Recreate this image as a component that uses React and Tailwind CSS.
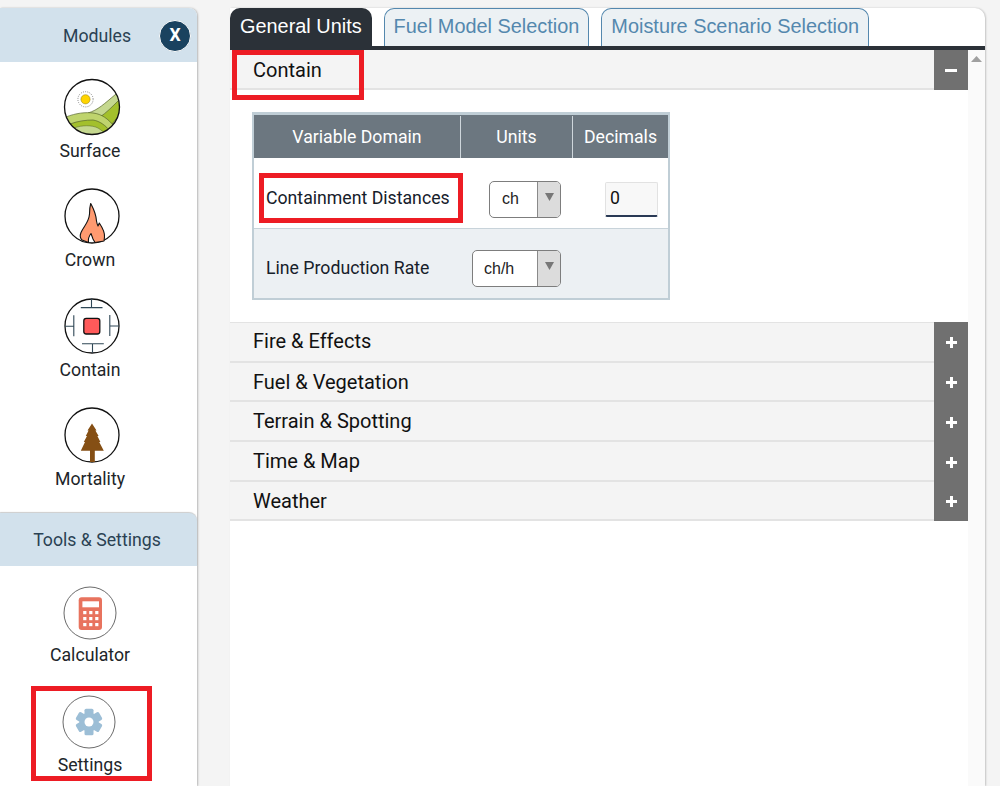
import React from "react";

const Circle = ({ children, thin }) => (
  <svg width="60" height="60" viewBox="0 0 60 60" className="block">
    <circle cx="30" cy="30" r={thin ? 26 : 27} fill="#fff" stroke={thin ? "#444" : "#111"} strokeWidth={thin ? 0.8 : 1.3} />
    {children}
  </svg>
);

const SurfaceIcon = () => (
  <svg width="60" height="60" viewBox="0 0 60 60" className="block">
    <defs>
      <clipPath id="sf"><circle cx="30" cy="30" r="27.4" /></clipPath>
    </defs>
    <circle cx="30" cy="30" r="27.5" fill="#fff" />
    <g clipPath="url(#sf)">
      <path d="M26 36 C36 33 42 27 54 17 L60 20 L60 60 L30 60 Z" fill="#c5d88f" stroke="#56652a" strokeWidth=".7" />
      <path d="M38 40 C44 36 50 30 57 23 L58 37 L50 47 Z" fill="#a3c02c" stroke="#56652a" strokeWidth=".7" />
      <path d="M4 40 C14 36 24 35 31 36 C40 37 46 42 52 49 L40 60 L0 60 Z" fill="#bfd46d" stroke="#56652a" strokeWidth=".7" />
      <path d="M8 47 C16 44 24 43 31 43 C38 44 44 49 48 54 L40 60 L14 60 Z" fill="#a3c02c" stroke="#56652a" strokeWidth=".7" />
      <path d="M12 51 C20 48 30 48 36 51 C39 53 42 55 44 58 L30 62 L14 60 Z" fill="#c5d88f" stroke="#56652a" strokeWidth=".5" />
    </g>
    <circle cx="30" cy="30" r="27.5" fill="none" stroke="#111" strokeWidth="1.3" />
    <circle cx="23.5" cy="22.3" r="7.6" fill="none" stroke="#777" strokeWidth=".9" strokeDasharray="1 1.2" />
    <circle cx="23.5" cy="22.3" r="4.6" fill="#ffd400" stroke="#8a7a10" strokeWidth=".5" />
  </svg>
);

const CrownIcon = () => (
  <Circle>
    <path d="M28.7 17.5 C31 22 34 27 34.5 35 C35 38 35.5 39 36 40 C36.5 39 37 38 37.3 37 C40 41 43 46 42.5 51 L42 55 L33 56.5 L31 53 L29 47.5 C27 50 26 53 26.5 56.5 L20 54 C18 52 18 49 19 46.5 C22 40 27 36 27.5 28 C27.5 24 28 20 28.7 17.5 Z" fill="#ff9a70" stroke="#111" strokeWidth="1.1" strokeLinejoin="round" />
  </Circle>
);

const ContainIcon = () => (
  <Circle>
    <g stroke="#2f4756" strokeWidth="1.1" fill="none">
      <path d="M18.8 11.6 H40.5 M29.5 2.6 V11.6" />
      <path d="M20 47.8 H41.8 M30.5 47.8 V56.8" />
      <path d="M11.8 19.3 V40.3 M3 30.3 H11.8" />
      <path d="M47.8 19 V40 M47.8 30 H57" />
    </g>
    <rect x="21.8" y="22.3" width="16" height="15.7" rx="2.5" fill="#ff5a5a" stroke="#111" strokeWidth="1.3" />
  </Circle>
);

const MortalityIcon = () => (
  <Circle>
    <path d="M30 18.5 L34.5 25.5 L33.4 25.5 L36.6 31 L35.4 31 L38.4 37 L37.2 37 L41.8 45.7 L32.8 45.7 L32.8 57 L28 57 L28 45.7 L18.8 45.7 L23 37 L21.8 37 L25 31 L23.8 31 L26.6 25.5 L25.5 25.5 Z" fill="#854f14" />
  </Circle>
);

const CalcIcon = () => (
  <Circle thin>
    <rect x="18.7" y="14.3" width="23.3" height="32.7" rx="3" fill="#e8735e" />
    <rect x="22.4" y="18.3" width="16.6" height="6" fill="#fff" />
    {[28, 34, 40].map((y) =>
      [23.2, 29.2, 35.2].map((x) => <rect key={`${x}${y}`} x={x} y={y} width="3.2" height="3.2" fill="#fff" />)
    )}
  </Circle>
);

const GearIcon = () => (
  <Circle thin>
    <g transform="translate(30 30)">
      <g fill="#9cbed6">
        {[0, 60, 120, 180, 240, 300].map((a) => (
          <rect key={a} x="-4.5" y="-13.3" width="9" height="8" rx="1.6" transform={`rotate(${a})`} />
        ))}
      </g>
      <circle r="9.6" fill="#9cbed6" />
      <circle r="4.5" fill="#fff" />
    </g>
  </Circle>
);

const NavItem = ({ icon, label, iconClass = "ml-[4px]", labelClass = "mt-[3px]" }) => (
  <div className="flex flex-col items-center">
    <div className={iconClass}>{icon}</div>
    <span className={`text-[17.7px] leading-[22px] text-[#212529] ${labelClass}`}>{label}</span>
  </div>
);

const Arrow = () => (
  <svg width="9" height="8" viewBox="0 0 9 8"><path d="M0 0H9L4.5 8Z" fill="#777" /></svg>
);

const Select = ({ value, className, pad }) => (
  <div className={`flex h-[37px] rounded-[5px] border border-[#7d7d7d] overflow-hidden bg-white ${className}`}>
    <div
      className={`flex-1 flex items-center text-[16px] text-[#222] ${pad}`}
      style={{ fontFamily: '"Liberation Sans", Arial, sans-serif' }}
    >
      {value}
    </div>
    <div className="w-[23px] bg-[#dcdcdc] border-l border-[#8a8a8a] flex items-start justify-center pt-[11px]">
      <Arrow />
    </div>
  </div>
);

const AccRow = ({ label, sign = "+", className = "h-[40px]", textClass = "", btnClass = "" }) => (
  <div className={`flex bg-[#f4f4f4] border-b-2 border-[#e3e3e3] ${className}`}>
    <div className={`flex-1 pl-[23px] flex items-center text-[20px] text-[#111] ${textClass}`}>{label}</div>
    <div className={`w-[34px] -mb-[2px] bg-[#707070] flex items-center justify-center ${btnClass}`}>
      {sign === "+" ? (
        <svg width="11" height="11" viewBox="0 0 11 11"><path d="M4 0H7V4H11V7H7V11H4V7H0V4H4Z" fill="#fff" /></svg>
      ) : (
        <svg width="12" height="3" viewBox="0 0 12 3"><rect width="12" height="3" fill="#fff" /></svg>
      )}
    </div>
  </div>
);

const Tab = ({ label, active, className = "" }) => (
  <div
    className={`h-[38px] rounded-t-[10px] flex items-center text-[19.9px] ${
      active ? "px-[10px] bg-[#2b3138] text-white" : "px-[9px] pb-[2px] bg-[#ecf1f4] text-[#5488ae] border border-b-0 border-[#5488ae]"
    } ${className}`}
    style={{ fontFamily: '"Liberation Sans", Arial, sans-serif' }}
  >
    {label}
  </div>
);

const RedBox = ({ className }) => <div className={`absolute border-[5px] border-[#ed1c24] ${className}`} />;

export default function App() {
  return (
    <div
      className="relative h-[786px] w-[1000px] overflow-hidden bg-[#f4f4f4] flex pt-2"
      style={{ fontFamily: 'Roboto, "Liberation Sans", sans-serif' }}
    >
      {/* Sidebar */}
      <aside className="w-[197px] shrink-0 flex flex-col bg-white shadow-[1px_0_2px_rgba(0,0,0,0.25)] rounded-tr-[8px]">
        <div className="relative h-[54px] shrink-0 bg-[#d2e1ec] rounded-tr-[8px] flex items-center justify-center pr-[3px] pt-[2px]">
          <span className="text-[17.7px] text-[#2a4153]">Modules</span>
          <div className="absolute left-[159px] top-[11.5px] h-[32px] w-[32px] rounded-full bg-[#1a425f] border border-white flex items-center justify-center text-white font-bold text-[17.6px] leading-none">
            X
          </div>
        </div>
        <div className="h-[451px] w-[180px] shrink-0 flex flex-col pt-[15px] gap-[24.3px]">
          <NavItem icon={<SurfaceIcon />} label="Surface" />
          <NavItem icon={<CrownIcon />} label="Crown" />
          <NavItem icon={<ContainIcon />} label="Contain" />
          <NavItem icon={<MortalityIcon />} label="Mortality" />
        </div>
        <div className="h-[53px] shrink-0 bg-[#d2e1ec] rounded-tr-[8px] shadow-[0_-1px_1px_rgba(0,0,0,0.2)] flex items-center justify-center pr-[3px] pt-[1px]">
          <span className="text-[17.7px] text-[#2a4153]">Tools &amp; Settings</span>
        </div>
        <div className="w-[180px] flex flex-col pt-[17px] gap-[26px]">
          <NavItem icon={<CalcIcon />} label="Calculator" iconClass="mr-[1px]" labelClass="mt-[1px]" />
          <NavItem icon={<GearIcon />} label="Settings" iconClass="-ml-[2px]" labelClass="mt-[2px]" />
        </div>
      </aside>

      {/* Main panel */}
      <main className="ml-[33px] w-[755px] flex flex-col bg-white rounded-tr-[10px] shadow-[1px_0_2px_rgba(0,0,0,0.2)]">
        <div className="h-[38px] flex gap-[12px] shrink-0">
          <Tab label="General Units" active />
          <Tab label="Fuel Model Selection" />
          <Tab label="Moisture Scenario Selection" />
        </div>
        <div className="h-[4px] bg-[#2b3138] shrink-0" />
        <div className="flex flex-1">
          <div className="w-[738px]">
            <AccRow label="Contain" sign="-" textClass="pt-[2px]" />
            <div className="h-[232px] pt-[22px] pl-[22px]">
              <div className="w-[418px] h-[188px] border-[2px] border-t-[3px] border-[#c0ced6] text-[#222]">
                <div className="flex h-[44px] pt-[1px] bg-[#6c7780] text-white text-[17.7px] border-b border-white">
                  <div className="w-[207px] border-r border-[#ced6db] flex items-center justify-center">Variable Domain</div>
                  <div className="w-[112px] border-r border-[#ced6db] flex items-center justify-center">Units</div>
                  <div className="flex-1 flex items-center justify-center">Decimals</div>
                </div>
                <div className="flex items-center h-[70px] pt-[11px] bg-white border-b border-[#c8d3da] text-[17.7px] text-[#16202a]">
                  <div className="pl-[12px] w-[235px] -mt-[2px]">Containment Distances</div>
                  <Select value="ch" className="w-[72px]" pad="pl-[12px]" />
                  <div className="ml-[44px] w-[53px] h-[35px] bg-[#f8f8f8] border border-[#e2e2e2] border-b-2 border-b-[#2a3a55] rounded-[2px] flex items-center pl-[4px] text-[#111] text-[17.7px]">
                    0
                  </div>
                </div>
                <div className="flex items-center h-[69px] pt-[10px] bg-[#ecf0f3] text-[17.7px] text-[#16202a]">
                  <div className="pl-[12px] w-[218px]">Line Production Rate</div>
                  <Select value="ch/h" className="w-[89px]" pad="pl-[11px]" />
                </div>
              </div>
            </div>
            <div className="border-t border-[#e3e3e3]">
              <AccRow label="Fire & Effects" textClass="pb-[2px]" btnClass="-mt-[1px]" />
              <AccRow label="Fuel & Vegetation" className="h-[39px]" />
              <AccRow label="Terrain & Spotting" />
              <AccRow label="Time & Map" />
              <AccRow label="Weather" className="h-[39px]" />
            </div>
          </div>
          <div className="flex-1 bg-[#fafafa] flex justify-center pt-[6px]">
            <svg width="11" height="6" viewBox="0 0 11 6"><path d="M5.5 0L11 6H0Z" fill="#a0a0a0" /></svg>
          </div>
        </div>
      </main>

      <RedBox className="left-[232px] top-[50px] w-[132px] h-[50px]" />
      <RedBox className="left-[259px] top-[173px] w-[204px] h-[50px]" />
      <RedBox className="left-[31px] top-[686px] w-[121px] h-[95px]" />
    </div>
  );
}
